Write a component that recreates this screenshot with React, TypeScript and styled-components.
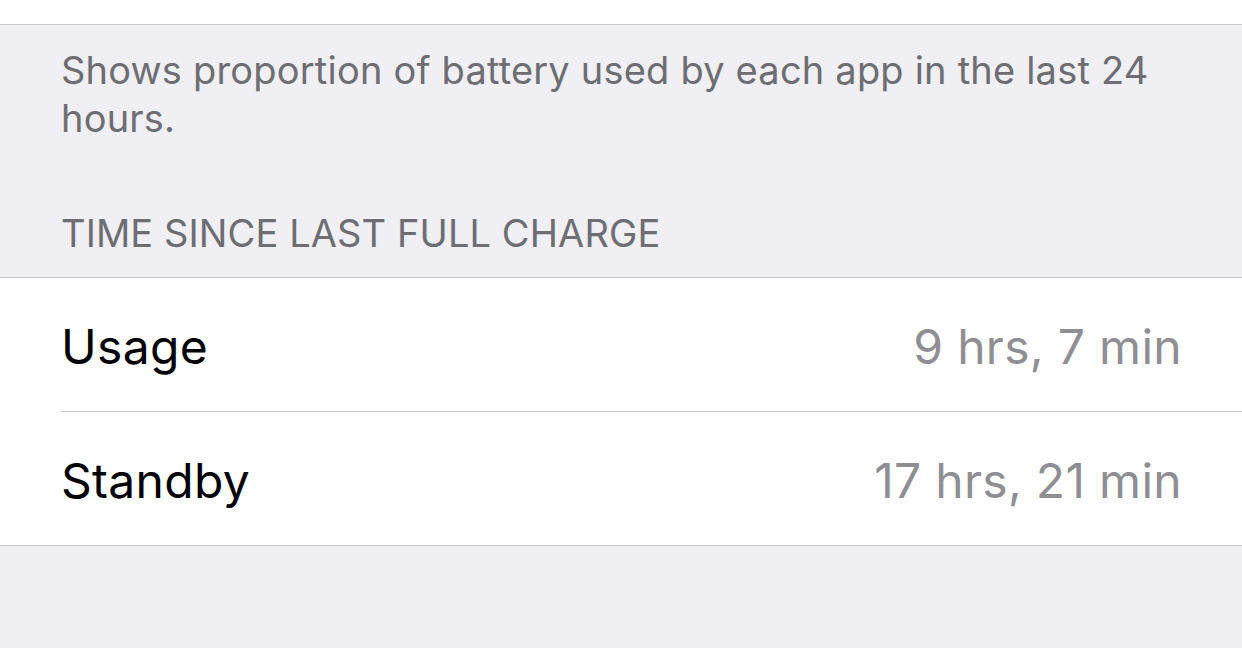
import React from "react";
import styled, { createGlobalStyle } from "styled-components";

const Global = createGlobalStyle`
  html, body { margin: 0; padding: 0; background: #efeff4; }
  body { font-family: Inter, "Noto Sans", sans-serif; -webkit-font-smoothing: antialiased; }
`;

const Page = styled.div`
  width: 1242px;
  height: 648px;
  background: #efeff4;
  display: flex;
  flex-direction: column;
  overflow: hidden;
`;

const TopCell = styled.div`
  flex: none;
  height: 24px;
  background: #ffffff;
  border-bottom: 1.5px solid #c8c7cc;
`;

const Footer = styled.p`
  margin: 0;
  padding: 21px 80px 0 61px;
  font-size: 38px;
  line-height: 48px;
  color: #6d6d72;
  letter-spacing: 0.2px;
`;

const Header = styled.h2`
  margin: 0;
  padding: 69px 61px 0 61px;
  height: 44px;
  font-size: 38px;
  line-height: 44px;
  font-weight: 400;
  color: #6d6d72;
  text-transform: uppercase;
  letter-spacing: 0.1px;
`;

const Group = styled.div`
  margin-top: 22px;
  background: #ffffff;
  border-top: 1.5px solid #c8c7cc;
  border-bottom: 1.5px solid #c8c7cc;
  padding-left: 61px;
`;

const Row = styled.div<{ $last?: boolean }>`
  height: 133px;
  display: flex;
  align-items: center;
  justify-content: space-between;
  padding-right: 60px;
  border-bottom: ${(p) => (p.$last ? "none" : "1.5px solid #c8c7cc")};
`;

const Label = styled.span`
  font-size: 48px;
  letter-spacing: 0.3px;
  color: #000000;
  padding-top: 4px;
`;

const Value = styled.span`
  font-size: 48px;
  letter-spacing: 0.3px;
  color: #8e8e93;
  padding-top: 4px;
`;

const rows = [
  { label: "Usage", value: "9 hrs, 7 min" },
  { label: "Standby", value: "17 hrs, 21 min" },
];

export default function App() {
  return (
    <Page>
      <Global />
      <TopCell />
      <Footer>Shows proportion of battery used by each app in the last 24 hours.</Footer>
      <Header>Time Since Last Full Charge</Header>
      <Group>
        {rows.map((r, i) => (
          <Row key={r.label} $last={i === rows.length - 1}>
            <Label>{r.label}</Label>
            <Value>{r.value}</Value>
          </Row>
        ))}
      </Group>
    </Page>
  );
}
